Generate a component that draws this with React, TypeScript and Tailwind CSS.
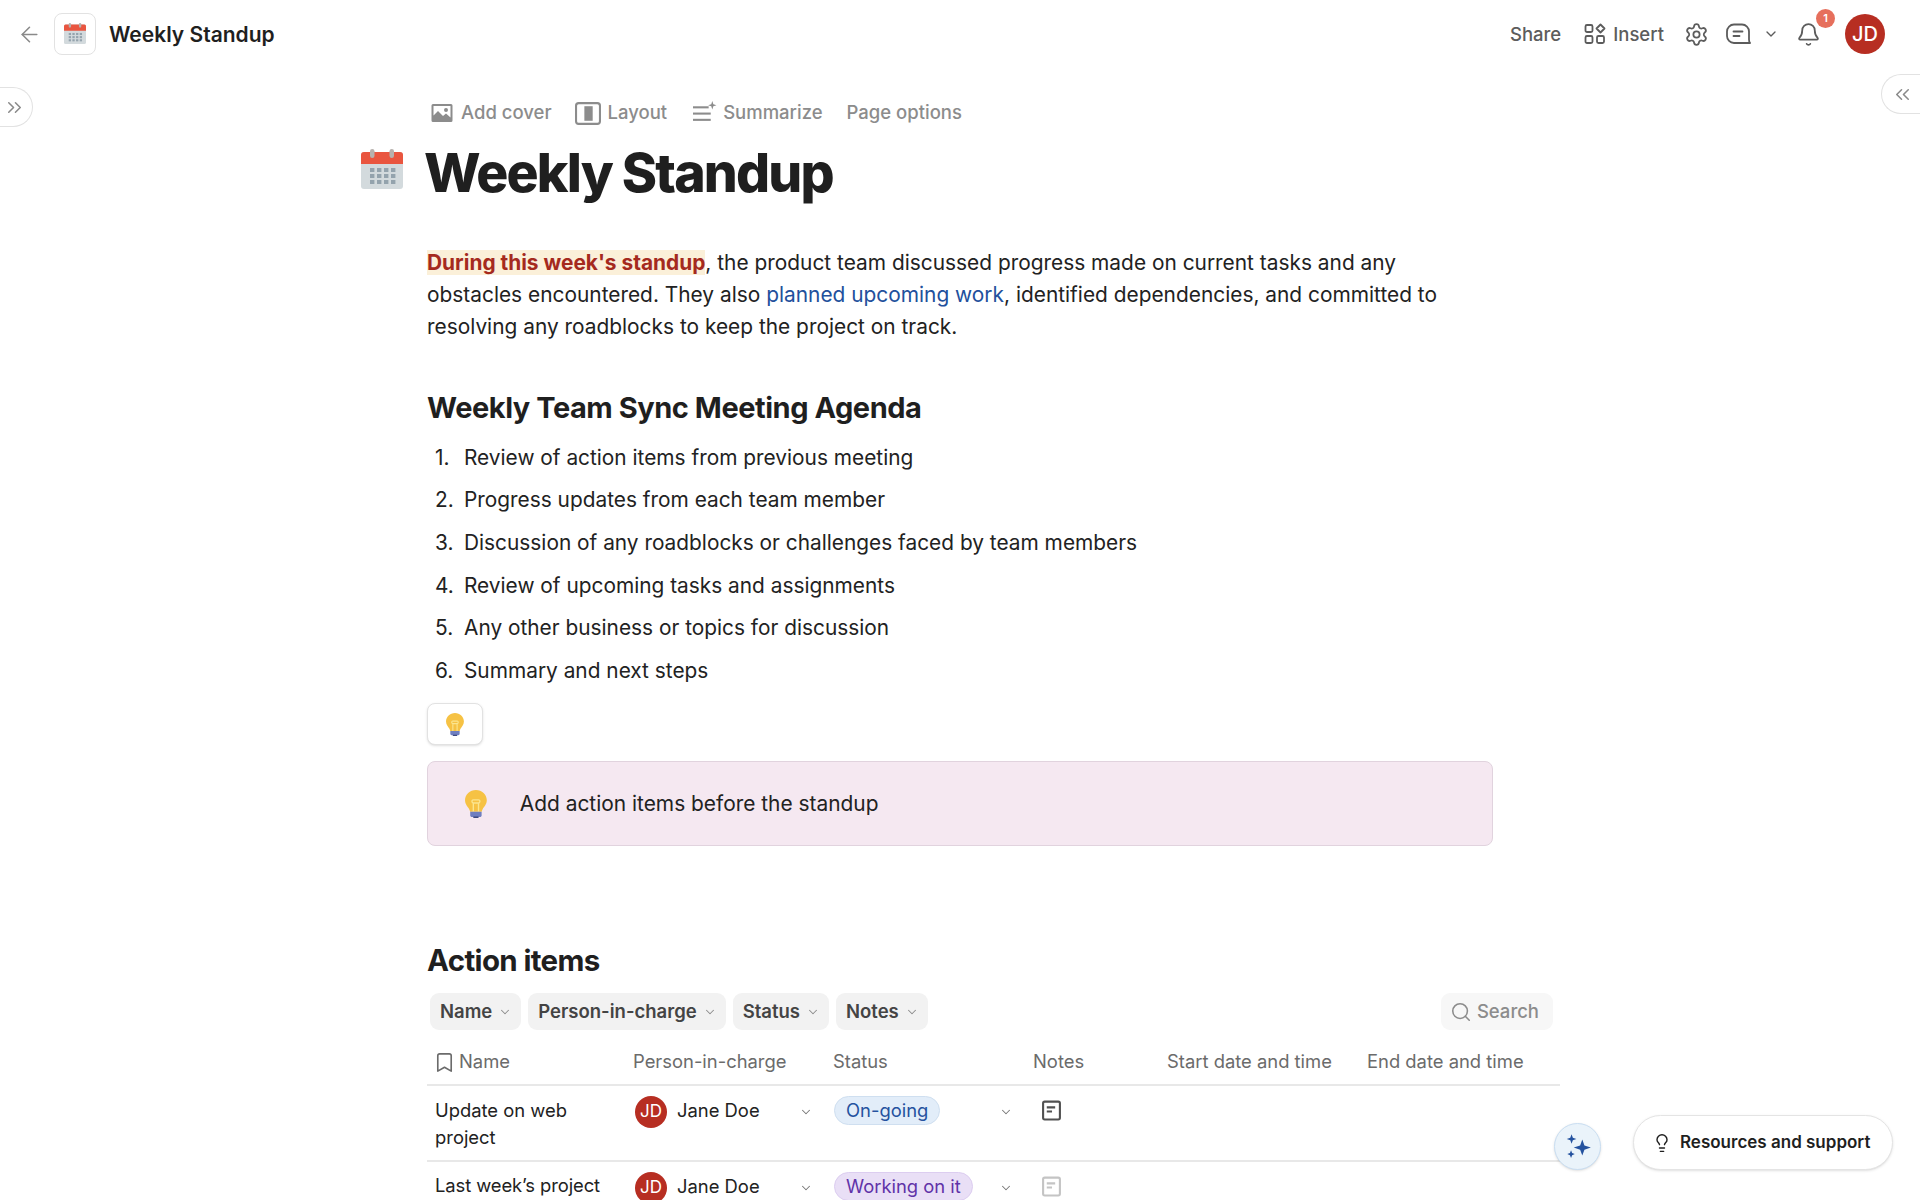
import React from "react";
import { ArrowLeft, ChevronDown, ChevronsLeft, ChevronsRight, Search, Settings, Bell, Bookmark, Lightbulb } from "lucide-react";

const font = { fontFamily: "Inter, 'Noto Sans', sans-serif" };

function Calendar({ size }: { size: number }) {
  return (
    <svg width={size} height={size} viewBox="0 0 42 42" fill="none">
      <rect x="0" y="3" width="42" height="37" rx="3" fill="#d3dadd" />
      <path d="M0 15V6a3 3 0 0 1 3-3h36a3 3 0 0 1 3 3v9z" fill="#e9553f" />
      <rect x="9" y="0" width="4.5" height="9" rx="2.2" fill="#b7b1ad" />
      <rect x="28.5" y="0" width="4.5" height="9" rx="2.2" fill="#b7b1ad" />
      {[19, 25, 31].map((y) =>
        [9, 16, 23, 30].map((x) => <rect key={`${x}-${y}`} x={x} y={y} width="4.4" height="4" fill="#94a3ad" />)
      )}
    </svg>
  );
}

function Bulb({ size }: { size: number }) {
  return (
    <svg width={size * 0.78} height={size} viewBox="0 0 21 27" fill="none">
      <path d="M10.5 0C4.7 0 0 4.5 0 10c0 3.7 2.5 6 4 8.5.6 1 .8 2 .9 2.500h11.200c.1-.5.3-1.500.9-2.500 1.500-2.500 4-4.800 4-8.500C21 4.500 16.300 0 10.500 0z" fill="#f6c244" />
      <path d="M8 21V12.500M13 21V12.500M8 12.500c-1.500 0-2-3 0-3h5c2 0 1.500 3 0 3z" stroke="#fbe58f" strokeWidth="1.300" />
      <path d="M5 21h11v3.500c0 .8-.7 1.500-1.500 1.500h-8C5.700 26 5 25.300 5 24.500z" fill="#6f7fc0" />
      <rect x="8" y="25.500" width="5" height="1.500" fill="#3d4a80" />
    </svg>
  );
}

function TopBar() {
  return (
    <header className="flex h-[68px] items-center justify-between pl-[17px] pr-[35px]">
      <div className="flex items-center">
        <ArrowLeft size={25} strokeWidth={1.500} className="text-[#8a8a8a]" />
        <div className="ml-[12px] flex h-[42px] w-[42px] items-center justify-center rounded-[8px] border border-[#e2e2e2] bg-white">
          <Calendar size={22} />
        </div>
        <div className="ml-[13px] mt-[2px] text-[21px] font-semibold text-[#1f1f1f]">Weekly Standup</div>
      </div>
      <div className="flex items-center text-[#5c5c5c]">
        <span className="mt-[2px] text-[18.500px] font-medium">Share</span>
        <svg className="ml-[23px]" width="22" height="22" viewBox="0 0 22 22" fill="none" stroke="currentColor" strokeWidth="1.800">
          <rect x="1.500" y="2" width="7" height="7" rx="1.500" />
          <rect x="1.500" y="13" width="7" height="7" rx="1.500" />
          <rect x="13" y="13" width="7" height="7" rx="1.500" />
          <path d="M16.500 1.500l4 4-4 4-4-4z" strokeLinejoin="round" />
        </svg>
        <span className="ml-[7px] mt-[2px] text-[18.500px] font-medium">Insert</span>
        <Settings size={25} strokeWidth={1.700} className="ml-[20px]" />
        <svg className="ml-[17px]" width="25" height="24" viewBox="0 0 25 24" fill="none" stroke="currentColor" strokeWidth="1.800">
          <path d="M8 2.500h8a7 7 0 0 1 7 7v8c0 2.500 1 3.500 1 3.500H8a7 7 0 0 1-7-7v-4.500a7 7 0 0 1 7-7z" strokeLinejoin="round" />
          <path d="M7.500 9.500h9M7.500 14h6" strokeLinecap="round" />
        </svg>
        <ChevronDown size={16} strokeWidth={2} className="ml-[12px]" />
        <div className="relative ml-[17px]">
          <Bell size={25} strokeWidth={1.700} className="block" />
          <span className="absolute left-[20px] top-[-13px] flex h-[19px] w-[19px] items-center justify-center rounded-full bg-[#e66f5c] text-[11px] font-semibold text-white">1</span>
        </div>
        <div className="ml-[24px] flex h-[40px] w-[40px] items-center justify-center rounded-full bg-[#b72e22] text-[20px] font-medium text-white">JD</div>
      </div>
    </header>
  );
}

function Toolbar() {
  return (
    <div className="flex h-[32px] items-center text-[18.500px] font-medium text-[#8c8c8c]">
      <div className="flex items-center">
        <svg width="22" height="20" viewBox="0 0 22 20"><path fillRule="evenodd" d="M2 1h18a1.500 1.500 0 0 1 1.500 1.500v15A1.500 1.500 0 0 1 20 19H2a1.500 1.500 0 0 1-1.500-1.500v-15A1.500 1.500 0 0 1 2 1zm.5 2v9.500L7 8l5 5 3-2.500 4.500 4V3zM15 5a2 2 0 1 1 0 4 2 2 0 0 1 0-4z" fill="currentColor" /></svg>
        <span className="ml-[8px]">Add cover</span>
      </div>
      <div className="ml-[23px] flex items-center">
        <svg width="26" height="23" viewBox="0 0 25 22" fill="none"><rect x="1" y="1" width="23" height="20" rx="2.500" stroke="currentColor" strokeWidth="2" /><rect x="9" y="4" width="8" height="14" fill="currentColor" /></svg>
        <span className="ml-[7px]">Layout</span>
      </div>
      <div className="ml-[26px] flex items-center">
        <svg className="mb-[4px]" width="24" height="21" viewBox="0 0 23 20" fill="currentColor"><rect x="0" y="5" width="15" height="2" /><rect x="0" y="11" width="17" height="2" /><rect x="0" y="17" width="17" height="2" /><path d="M18.500 0l1 3 3 1-3 1-1 3-1-3-3-1 3-1z" /></svg>
        <span className="ml-[6px]">Summarize</span>
      </div>
      <span className="ml-[24px]">Page options</span>
    </div>
  );
}

const agenda = [
  "Review of action items from previous meeting",
  "Progress updates from each team member",
  "Discussion of any roadblocks or challenges faced by team members",
  "Review of upcoming tasks and assignments",
  "Any other business or topics for discussion",
  "Summary and next steps",
];

function Chip({ label }: { label: string }) {
  return (
    <div className="flex h-[37px] items-center gap-[6px] rounded-[9px] bg-[#f2f2f2] pl-[10px] pr-[9px] text-[18.500px] font-semibold text-[#444]">
      {label}
      <ChevronDown size={14} strokeWidth={1.800} className="text-[#8c8c8c]" />
    </div>
  );
}

function NoteIcon({ faded }: { faded?: boolean }) {
  return (
    <svg width="21" height="21" viewBox="0 0 20 20" fill="none" stroke={faded ? "#c4c4c4" : "#505050"} strokeWidth="2">
      <rect x="2" y="1.500" width="16" height="17" rx="1.500" />
      <path d="M5.500 7h8M5.500 11h5" />
    </svg>
  );
}

function Person() {
  return (
    <div className="flex w-[180px] items-start">
      <div className="ml-[2px] flex h-[32px] w-[32px] items-center justify-center rounded-full bg-[#b72e22] text-[17px] text-white">JD</div>
      <span className="ml-[10px] mt-[1px] flex-1 text-[18.400px] text-[#222]">Jane Doe</span>
      <ChevronDown size={14} strokeWidth={1.800} className="mt-[9px] text-[#777]" />
    </div>
  );
}

function StatusPill({ label, tone }: { label: string; tone: "blue" | "purple" }) {
  const cls = tone === "blue" ? "border-[#cfdff0] bg-[#e2edf9] text-[#25529f]" : "border-[#dccdf0] bg-[#e9dff6] text-[#6032a8]";
  return (
    <div className="flex w-[180px] items-start justify-between">
      <span className={`ml-[1px] flex h-[29px] items-center rounded-full border px-[11px] text-[18.400px] ${cls}`}>{label}</span>
      <ChevronDown size={14} strokeWidth={1.800} className="mt-[9px] text-[#777]" />
    </div>
  );
}

const cols = "grid grid-cols-[198px_200px_200px_134px_200px_193px]";

function Table() {
  return (
    <div className="w-[1133px]">
      <div className="flex items-center justify-between pl-[3px] pr-[7px]">
        <div className="flex gap-[7px]">
          <Chip label="Name" />
          <Chip label="Person-in-charge" />
          <Chip label="Status" />
          <Chip label="Notes" />
        </div>
        <div className="flex h-[37px] items-center gap-[5px] rounded-[9px] bg-[#f7f7f7] pl-[9px] pr-[14px] text-[18.500px] font-medium text-[#8c8c8c]">
          <Search size={22} strokeWidth={1.700} />
          Search
        </div>
      </div>
      <div className={`${cols} mt-[10px] h-[46px] items-center border-b-2 border-[#e8e8e8] text-[18.400px] text-[#6b6b6b]`}>
        <div className="flex items-center pl-[6px]">
          <Bookmark size={23} strokeWidth={1.700} />
          <span className="ml-[3px]">Name</span>
        </div>
        <div className="pl-[8px]">Person-in-charge</div>
        <div className="pl-[8px]">Status</div>
        <div className="pl-[8px]">Notes</div>
        <div className="pl-[8px]">Start date and time</div>
        <div className="pl-[8px]">End date and time</div>
      </div>
      <div className={`${cols} h-[76px] border-b-2 border-[#e8e8e8] pt-[10px] text-[18.400px] text-[#222]`}>
        <div className="pl-[8px] pr-[20px] pt-[1px] leading-[27px]">Update on web project</div>
        <div className="pl-[8px]"><Person /></div>
        <div className="pl-[8px]"><StatusPill label="On-going" tone="blue" /></div>
        <div className="pl-[16px] pt-[4px]"><NoteIcon /></div>
      </div>
      <div className={`${cols} h-[76px] pt-[10px] text-[18.400px] text-[#222]`}>
        <div className="pl-[8px] leading-[27px] tracking-[-0.005em]">Last week’s project</div>
        <div className="pl-[8px]"><Person /></div>
        <div className="pl-[8px]"><StatusPill label="Working on it" tone="purple" /></div>
        <div className="pl-[16px] pt-[4px]"><NoteIcon faded /></div>
      </div>
    </div>
  );
}

export default function App() {
  return (
    <div className="relative h-[1200px] w-[1920px] overflow-hidden bg-white" style={font}>
      <TopBar />
      <div className="absolute left-0 top-[87px] flex h-[40px] w-[33px] items-center rounded-r-full border border-l-0 border-[#e2e2e2] bg-white pl-[3px] text-[#8a8a8a]">
        <ChevronsRight size={23} strokeWidth={1.600} />
      </div>
      <div className="absolute right-0 top-[74px] flex h-[40px] w-[39px] items-center justify-center rounded-l-full border border-r-0 border-[#e2e2e2] bg-white pl-[2px] text-[#8a8a8a]">
        <ChevronsLeft size={23} strokeWidth={1.600} />
      </div>

      <main className="ml-[427px] w-[1066px]">
        <div className="mt-[29px] pl-[4px]"><Toolbar /></div>
        <div className="relative mt-[12px]">
          <div className="absolute left-[-66px] top-[8px]"><Calendar size={42} /></div>
          <h1 className="ml-[-3px] text-[53.500px] font-extrabold leading-[64px] tracking-[-0.034em] text-[#1f1f1f]">Weekly Standup</h1>
        </div>
        <p className="mt-[42px] text-[20.880px] leading-[32px] text-[#222]">
          <span className="bg-[#fbf0d9] font-bold text-[#a52a1e]">During this week's standup</span>, the product team discussed progress made on current tasks and any obstacles encountered. They also <span className="text-[#22509c]">planned upcoming work</span>, identified dependencies, and committed to resolving any roadblocks to keep the project on track.
        </p>
        <h2 className="mt-[45px] text-[29px] font-bold leading-[40px] tracking-[-0.016em] text-[#1f1f1f]">Weekly Team Sync Meeting Agenda</h2>
        <ol className="mt-[8px] text-[20.850px] text-[#222]">
          {agenda.map((t, i) => (
            <li key={t} className="flex h-[42.700px] items-center">
              <span className="w-[37px] pl-[8px]">{i + 1}.</span>
              {t}
            </li>
          ))}
        </ol>
        <div className="mt-[11px] flex h-[42px] w-[56px] items-center justify-center rounded-[8px] border border-[#e2e2e2] bg-white shadow-sm">
          <Bulb size={23} />
        </div>
        <div className="mt-[16px] flex h-[85px] items-center rounded-[8px] border border-[#e1d3de] bg-[#f5e8f1] pl-[37px]">
          <Bulb size={28} />
          <span className="ml-[33px] text-[20.900px] text-[#222]">Add action items before the standup</span>
        </div>
        <h2 className="mt-[94px] text-[29.500px] font-bold leading-[40px] tracking-[-0.022em] text-[#1f1f1f]">Action items</h2>
        <div className="mt-[13px]"><Table /></div>
      </main>

      <div className="absolute left-[1554px] top-[1123px] flex h-[47px] w-[47px] items-center justify-center rounded-full border border-[#c9def2] bg-[#eaf3fa] shadow-sm">
        <svg width="30" height="30" viewBox="0 0 28 28" fill="#24529f">
          <path d="M18 7l2 5.500 6 2-6 2-2 5.500-2-5.500-6-2 6-2z" />
          <path d="M8 2l1.200 3.300L12.500 6.500 9.200 7.700 8 11 6.800 7.700 3.500 6.500l3.300-1.200z" />
          <path d="M7.500 17l1 2.600 2.500 1-2.500 1-1 2.600-1-2.600-2.500-1 2.500-1z" />
        </svg>
      </div>
      <div className="absolute left-[1633px] top-[1115px] flex h-[55px] w-[260px] items-center rounded-full border border-[#e4e4e4] bg-white pl-[18px] text-[17px] font-semibold text-[#1f1f1f] shadow-sm">
        <Lightbulb size={20} strokeWidth={1.700} />
        <span className="ml-[8px] mt-[1px]">Resources and support</span>
      </div>
    </div>
  );
}
